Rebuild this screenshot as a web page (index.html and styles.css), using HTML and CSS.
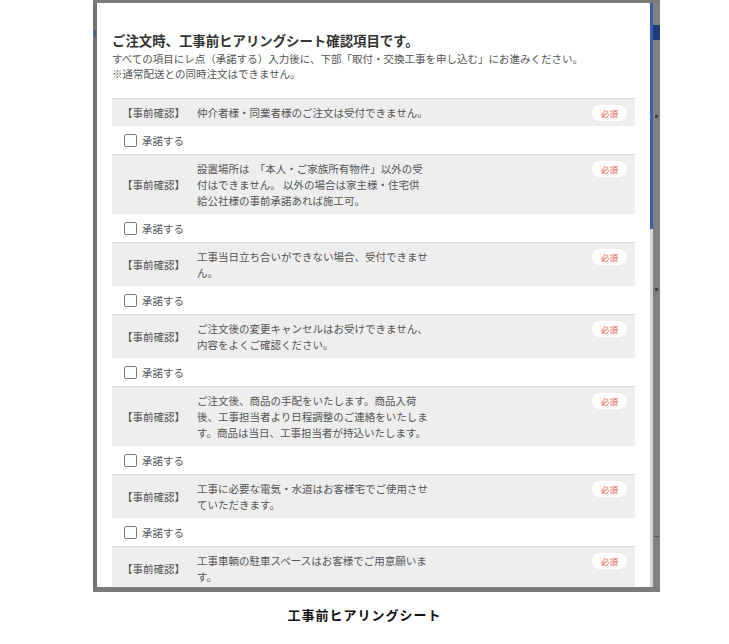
FILE: index.html
```html
<!DOCTYPE html>
<html lang="ja">
<head>
    <meta charset="UTF-8">
    <title>工事前ヒアリングシート</title>
    <link rel="stylesheet" href="styles.css">
</head>
<body>

    <figure class="shot">
        <div class="shot__frame">
            <div class="shot__side shot__side--left"><span class="shot__mark"></span></div>

            <div class="modal">
                <div class="modal__body">
                    <h2 class="modal__title">ご注文時、工事前ヒアリングシート確認項目です。</h2>
                    <p class="modal__lead">すべての項目にレ点（承諾する）入力後に、下部「取付・交換工事を申し込む」にお進みください。<br>※通常配送との同時注文はできません。</p>

                    <ul class="checklist">
                        <li>
                            <div class="check">
                                <span class="check__label">【事前確認】</span>
                                <span class="check__text">仲介者様・同業者様のご注文は受付できません。</span>
                                <span class="check__badge">必須</span>
                            </div>
                            <label class="agree"><input type="checkbox">承諾する</label>
                        </li>
                        <li>
                            <div class="check">
                                <span class="check__label">【事前確認】</span>
                                <span class="check__text">設置場所は　「本人・ご家族所有物件」以外の受付はできません。 以外の場合は家主様・住宅供給公社様の事前承諾あれば施工可。</span>
                                <span class="check__badge">必須</span>
                            </div>
                            <label class="agree"><input type="checkbox">承諾する</label>
                        </li>
                        <li>
                            <div class="check">
                                <span class="check__label">【事前確認】</span>
                                <span class="check__text">工事当日立ち合いができない場合、受付できません。</span>
                                <span class="check__badge">必須</span>
                            </div>
                            <label class="agree"><input type="checkbox">承諾する</label>
                        </li>
                        <li>
                            <div class="check">
                                <span class="check__label">【事前確認】</span>
                                <span class="check__text">ご注文後の変更キャンセルはお受けできません、内容をよくご確認ください。</span>
                                <span class="check__badge">必須</span>
                            </div>
                            <label class="agree"><input type="checkbox">承諾する</label>
                        </li>
                        <li>
                            <div class="check">
                                <span class="check__label">【事前確認】</span>
                                <span class="check__text">ご注文後、商品の手配をいたします。商品入荷後、工事担当者より日程調整のご連絡をいたします。商品は当日、工事担当者が持込いたします。</span>
                                <span class="check__badge">必須</span>
                            </div>
                            <label class="agree"><input type="checkbox">承諾する</label>
                        </li>
                        <li>
                            <div class="check">
                                <span class="check__label">【事前確認】</span>
                                <span class="check__text">工事に必要な電気・水道はお客様宅でご使用させていただきます。</span>
                                <span class="check__badge">必須</span>
                            </div>
                            <label class="agree"><input type="checkbox">承諾する</label>
                        </li>
                        <li>
                            <div class="check">
                                <span class="check__label">【事前確認】</span>
                                <span class="check__text">工事車輌の駐車スペースはお客様でご用意願います。</span>
                                <span class="check__badge">必須</span>
                            </div>
                        </li>
                    </ul>
                </div>
                <div class="modal__scroll"><div class="modal__thumb"></div></div>
            </div>

            <div class="shot__side shot__side--right">
                <span class="shot__tab"></span>
                <span class="shot__dot shot__dot--a"></span>
                <span class="shot__dot shot__dot--b"></span>
                <span class="shot__dot shot__dot--c"></span>
            </div>
        </div>
        <figcaption class="shot__caption">工事前ヒアリングシート</figcaption>
    </figure>

</body>
</html>
```

FILE: styles.css
```css
html {
  box-sizing: border-box;
}

*,
*::before,
*::after {
  box-sizing: inherit;
}

body {
  margin: 0;
  background-color: #fff;
  font-family: "Noto Sans CJK JP", "Noto Sans", sans-serif;
  color: #555;
}

h2,
p,
ul,
li,
figure {
  margin: 0;
  padding: 0;
}

ul {
  list-style: none;
}

/* screenshot frame */

.shot__frame {
  display: flex;
  width: 567px;
  height: 592px;
  margin-left: 93px;
  padding: 3px 0 5px;
  background-color: #7b7b7b;
}

.shot__side {
  display: flex;
  flex-direction: column;
  align-items: center;
}

.shot__side--left {
  width: 4px;
  background-color: #74726d;
}

.shot__side--right {
  width: 7px;
  background-color: #808080;
}

.shot__mark {
  width: 2px;
  height: 7px;
  margin-top: 27px;
  background-color: #4a5a8a;
}

.shot__tab {
  width: 7px;
  height: 15px;
  margin-top: 22px;
  background-color: #1e3a78;
}

.shot__dot {
  width: 3px;
  height: 3px;
  background-color: #444;
}

.shot__dot--a {
  margin-top: 75px;
}

.shot__dot--b {
  margin-top: 170px;
}

.shot__dot--c {
  width: 5px;
  height: 1px;
  margin-top: 245px;
  background-color: #555;
}

.shot__caption {
  margin-top: 13px;
  text-align: center;
  font-size: 13px;
  font-weight: 700;
  letter-spacing: 1px;
  color: #111;
}

/* modal */

.modal {
  display: flex;
  width: 556px;
  background-color: #fff;
}

.modal__body {
  flex: 1;
  padding: 28px 15px 0;
  overflow: hidden;
}

.modal__scroll {
  width: 3px;
  background-color: #d4d4d4;
}

.modal__thumb {
  height: 226px;
  background-color: #3b5fae;
}

.modal__title {
  font-size: 13.4px;
  line-height: 18px;
  font-weight: 700;
  color: #333;
}

.modal__lead {
  margin-top: 2px;
  font-size: 10.5px;
  line-height: 15px;
  color: #555;
}

.checklist {
  margin-top: 17px;
}

.check {
  display: flex;
  align-items: center;
  padding: 6px 8px 5px 10px;
  border-top: 1px dotted #c4c4c4;
  background-color: #eee;
  font-size: 10.5px;
  line-height: 16px;
}

.check__label {
  flex: none;
  width: 63px;
  margin-right: 12px;
}

.check__text {
  width: 232px;
}

.check__badge {
  align-self: flex-start;
  flex: none;
  width: 35px;
  height: 16px;
  margin-left: auto;
  border-radius: 8px;
  background-color: #fff;
  color: #e2583a;
  font-size: 8.5px;
  line-height: 16px;
  text-align: center;
}

.agree {
  display: flex;
  align-items: center;
  height: 28px;
  padding-left: 12px;
  font-size: 10.5px;
  color: #555;
}

.agree input {
  appearance: none;
  width: 13px;
  height: 13px;
  margin: 0 5px 0 0;
  border: 1px solid #7a7a7a;
  border-radius: 2px;
  background-color: #fff;
}
```
